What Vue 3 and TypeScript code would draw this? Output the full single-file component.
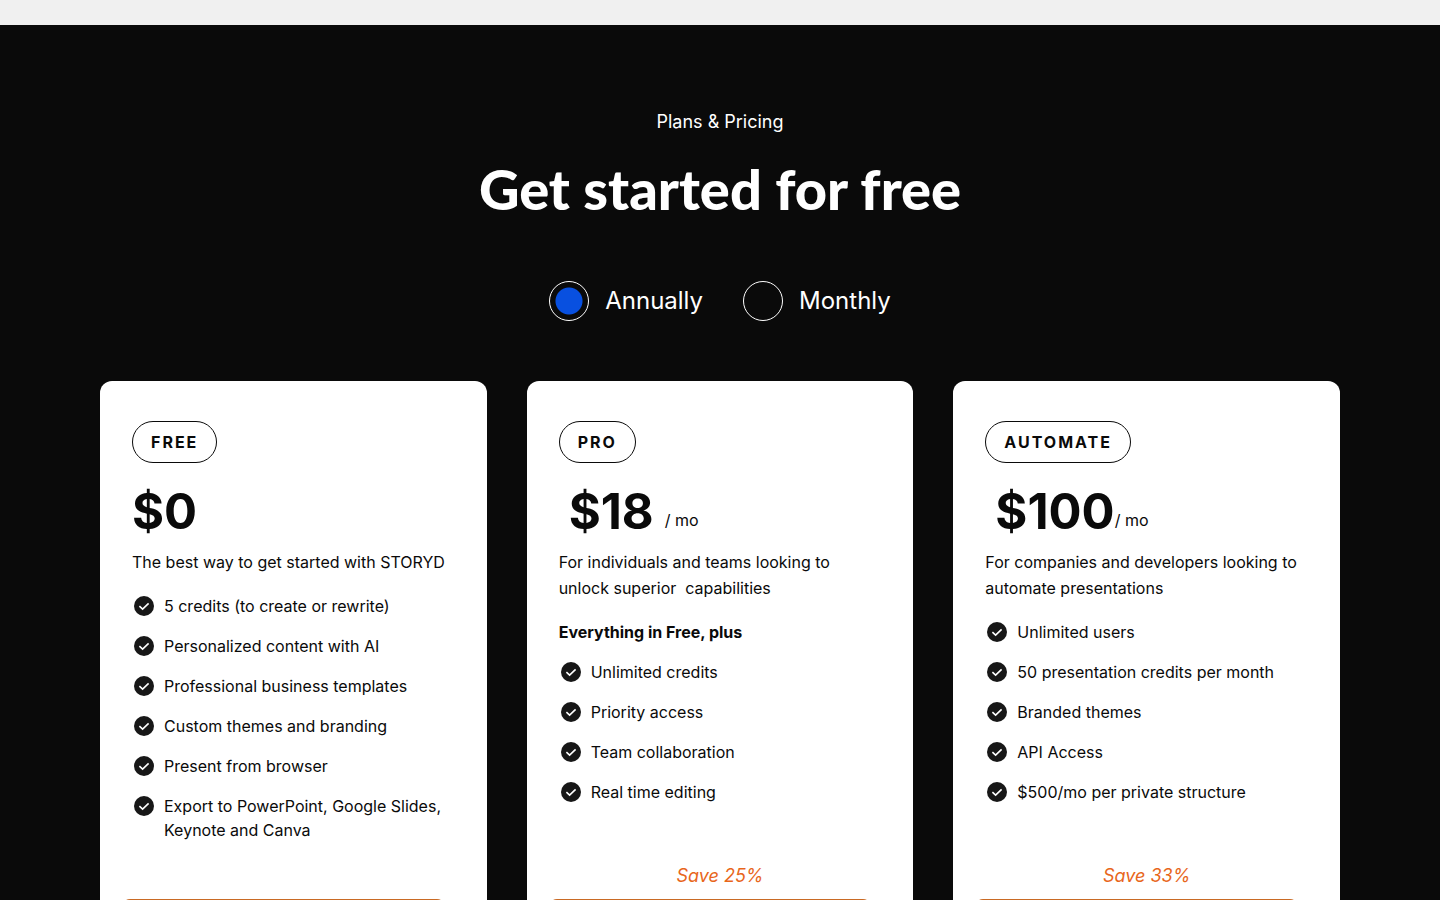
<script setup lang="ts">
import { ref } from 'vue'

type Billing = 'annually' | 'monthly'

interface Plan {
  id: string
  name: string
  price: string
  recurring: boolean
  description: string
  heading?: string
  features: string[]
  saving?: string
}

const billing = ref<Billing>('annually')

const cycles: { value: Billing; label: string }[] = [
  { value: 'annually', label: 'Annually' },
  { value: 'monthly', label: 'Monthly' },
]

const plans: Plan[] = [
  {
    id: 'free',
    name: 'FREE',
    price: '$0',
    recurring: false,
    description: 'The best way to get started with STORYD',
    features: [
      '5 credits (to create or rewrite)',
      'Personalized content with AI',
      'Professional business templates',
      'Custom themes and branding',
      'Present from browser',
      'Export to PowerPoint, Google Slides, Keynote and Canva',
    ],
  },
  {
    id: 'pro',
    name: 'PRO',
    price: '$18',
    recurring: true,
    description: 'For individuals and teams looking to unlock superior \u00a0capabilities',
    heading: 'Everything in Free, plus',
    features: ['Unlimited credits', 'Priority access', 'Team collaboration', 'Real time editing'],
    saving: 'Save 25%',
  },
  {
    id: 'automate',
    name: 'AUTOMATE',
    price: '$100',
    recurring: true,
    description: 'For companies and developers looking to automate presentations',
    features: [
      'Unlimited users',
      '50 presentation credits per month',
      'Branded themes',
      'API Access',
      '$500/mo per private structure',
    ],
    saving: 'Save 33%',
  },
]
</script>

<template>
  <main class="page">
    <section class="pricing">
      <header class="intro">
        <p class="eyebrow">Plans &amp; Pricing</p>
        <h1 class="title">Get started for free</h1>
      </header>

      <div class="cycles" role="radiogroup" aria-label="Billing cycle">
        <label v-for="cycle in cycles" :key="cycle.value" class="cycle">
          <input v-model="billing" class="radio" type="radio" name="billing" :value="cycle.value" />
          <span>{{ cycle.label }}</span>
        </label>
      </div>

      <div class="plans">
        <article v-for="plan in plans" :key="plan.id" class="card">
          <h2 class="badge">{{ plan.name }}</h2>
          <div class="price" :class="{ recurring: plan.recurring }">
            <span class="amount">{{ plan.price }}</span>
            <span v-if="plan.recurring" class="period">/ mo</span>
          </div>
          <p class="description">{{ plan.description }}</p>
          <h3 v-if="plan.heading" class="list-heading">{{ plan.heading }}</h3>
          <ul class="features" :class="{ 'after-heading': plan.heading }">
            <li v-for="feature in plan.features" :key="feature" class="feature">
              <svg class="check" viewBox="0 0 24 24" aria-hidden="true">
                <circle cx="12" cy="12" r="10" fill="#171717" />
                <path d="M7.4 12.1 10.6 15.1 16.6 9.3" fill="none" stroke="#fff" stroke-width="1.6" />
              </svg>
              <span>{{ feature }}</span>
            </li>
          </ul>
          <div class="footer">
            <p class="saving">{{ plan.saving }}</p>
            <button class="cta" type="button" :aria-label="`Choose ${plan.name}`"></button>
          </div>
        </article>
      </div>
    </section>
  </main>
</template>

<style>
body {
  background: #0a0a0a;
}
</style>

<style scoped>
.page {
  height: 100vh;
  overflow: hidden;
  border-top: 25px solid #f0f0f0;
  box-sizing: border-box;
  background: #0a0a0a;
  color: #fff;
  font-family: Inter, "Liberation Sans", sans-serif;
  font-size: 16px;
}

.pricing {
  padding: 83px 100px 100px;
}

p,
h1,
h2,
h3,
ul {
  margin: 0;
  padding: 0;
}

.intro {
  text-align: center;
}

.eyebrow {
  font-size: 18px;
  line-height: 27px;
}

.title {
  margin-top: 20px;
  font-family: Lato, "Open Sans", sans-serif;
  font-size: 56px;
  font-weight: 900;
  line-height: 68px;
}

.cycles {
  display: flex;
  justify-content: center;
  gap: 40px;
  margin: 58px 0 60px;
}

.cycle {
  display: flex;
  align-items: center;
  gap: 16px;
  font-size: 24px;
  line-height: 40px;
}

.radio {
  appearance: none;
  width: 40px;
  height: 40px;
  margin: 0;
  border: 1px solid #fff;
  border-radius: 50%;
}

.radio:checked {
  background: radial-gradient(circle, #0850e0 13px, transparent 14px);
}

.plans {
  display: grid;
  grid-template-columns: repeat(3, 1fr);
  gap: 40px;
}

.card {
  display: flex;
  flex-direction: column;
  align-items: flex-start;
  padding: 40px 32px;
  border-radius: 12px;
  background: #fff;
  color: #0a0a0a;
}

.badge {
  padding: 8px 18px;
  border: 1px solid #0a0a0a;
  border-radius: 21px;
  font-size: 16px;
  font-weight: 700;
  letter-spacing: 2px;
  line-height: 24px;
}

.price {
  display: flex;
  align-items: flex-end;
  margin: 18px 0 8px;
}

.amount {
  font-size: 49px;
  font-weight: 700;
  line-height: 60px;
}

.price .amount {
  padding-top: 2px;
  line-height: 58px;
}

.recurring .amount {
  min-width: 106px;
  box-sizing: border-box;
  padding-left: 10px;
}

.period {
  line-height: 42px;
}

.description {
  line-height: 26px;
}

.list-heading {
  margin-top: 19px;
  font-size: 16px;
  font-weight: 700;
  line-height: 24px;
}

.features {
  display: grid;
  gap: 16px;
  margin-top: 19px;
  list-style: none;
}

.features.after-heading {
  margin-top: 16px;
}

.feature {
  display: flex;
  gap: 8px;
  line-height: 24px;
}

.check {
  flex: none;
  width: 24px;
  height: 24px;
}

.footer {
  align-self: stretch;
  margin-top: auto;
  padding-top: 20px;
}

.saving {
  min-height: 27px;
  color: #e8661b;
  font-size: 18px;
  font-style: italic;
  line-height: 27px;
  text-align: center;
}

.cta {
  display: block;
  width: 100%;
  height: 56px;
  margin: 10px 0 0 -10px;
  border: 0;
  border-radius: 8px;
  background: #c96a24;
}
</style>
